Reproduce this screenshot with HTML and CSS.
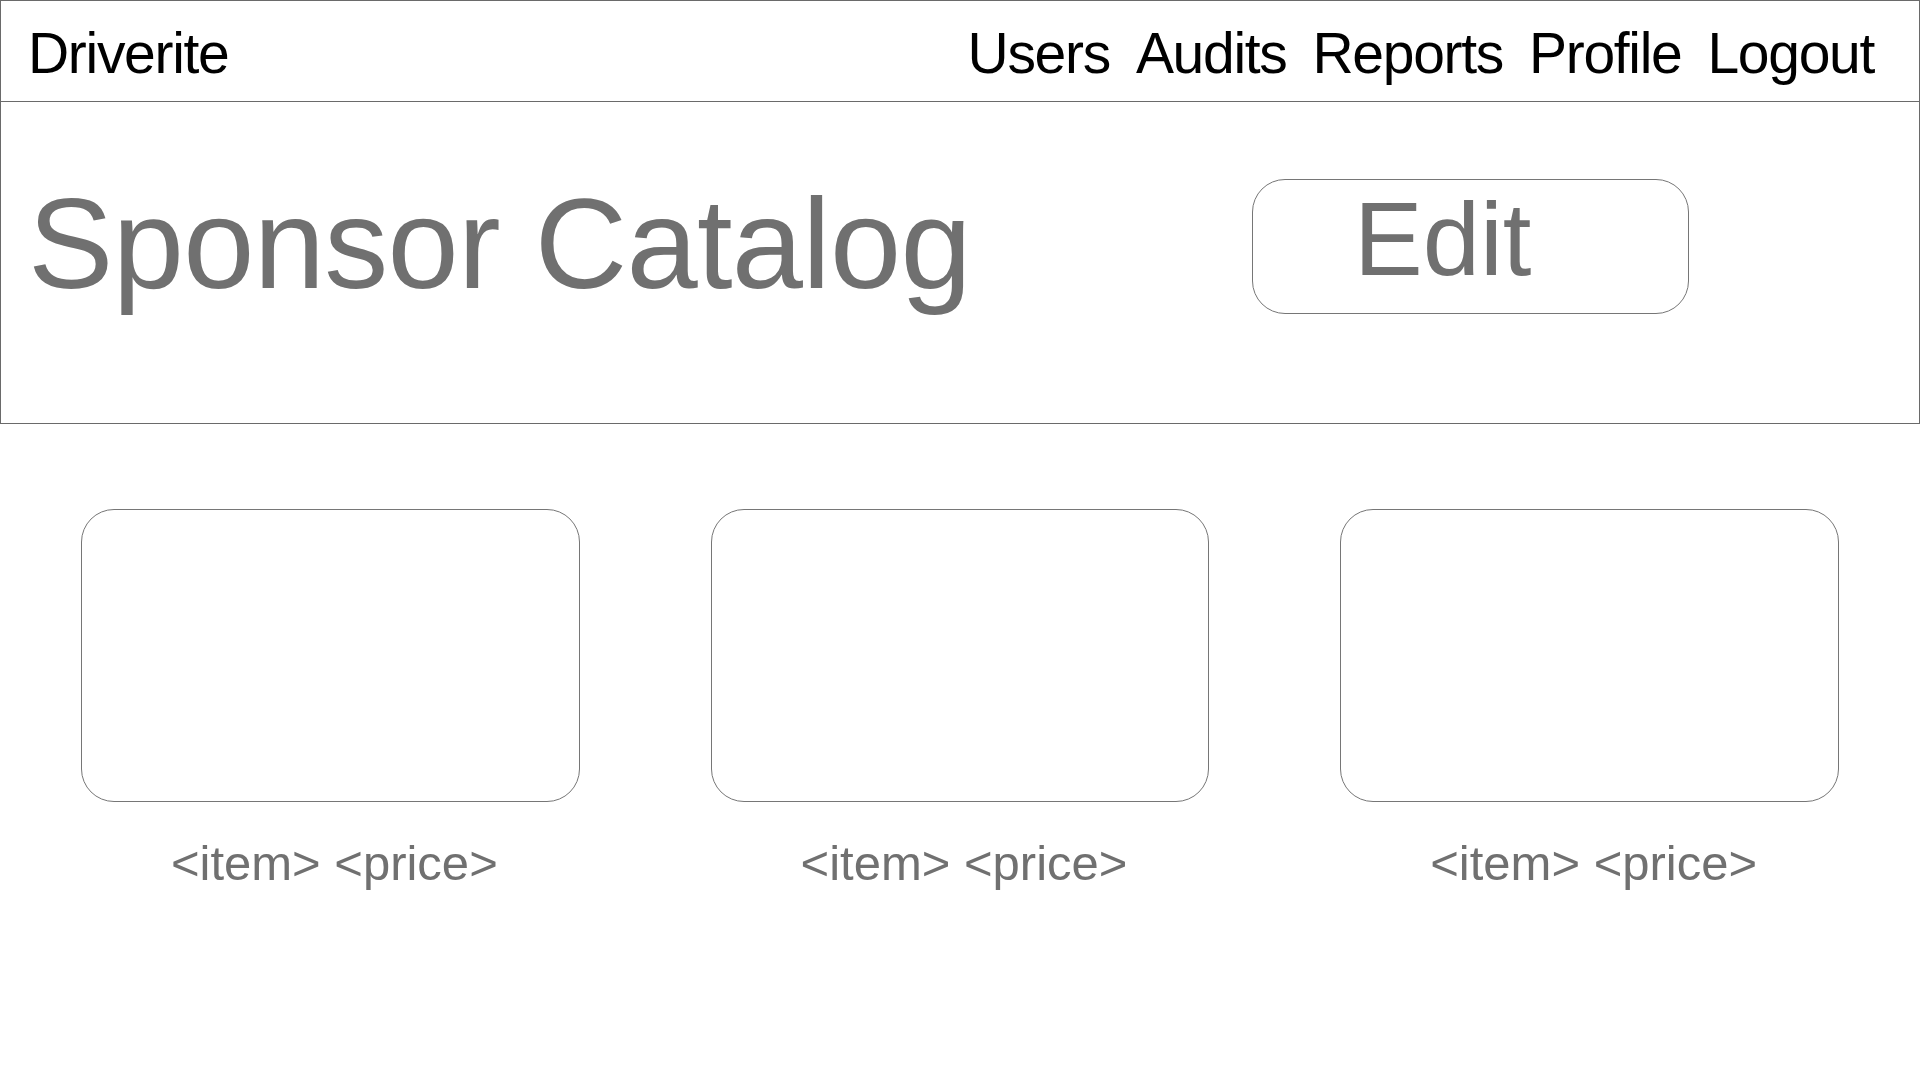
FILE: index.html
```html
<!DOCTYPE html>
<html lang="en">
<head>
<meta charset="utf-8">
<title>Driverite - Sponsor Catalog</title>
<link rel="stylesheet" href="styles.css">
</head>
<body>
<header class="topbar">
  <div class="brand">Driverite</div>
  <nav class="nav">
    <a class="nav-link" href="#">Users</a>
    <a class="nav-link" href="#">Audits</a>
    <a class="nav-link" href="#">Reports</a>
    <a class="nav-link" href="#">Profile</a>
    <a class="nav-link" href="#">Logout</a>
  </nav>
</header>
<section class="hero">
  <h1 class="title">Sponsor Catalog</h1>
  <button class="edit-btn" type="button"><span class="edit-label">Edit</span></button>
</section>
<main class="catalog">
  <div class="item">
    <div class="item-image"></div>
    <div class="item-caption">&lt;item&gt; &lt;price&gt;</div>
  </div>
  <div class="item">
    <div class="item-image"></div>
    <div class="item-caption">&lt;item&gt; &lt;price&gt;</div>
  </div>
  <div class="item">
    <div class="item-image"></div>
    <div class="item-caption">&lt;item&gt; &lt;price&gt;</div>
  </div>
</main>
</body>
</html>
```

FILE: styles.css
```css
* {
  box-sizing: border-box;
}

html, body {
  margin: 0;
  padding: 0;
  background: #ffffff;
}

body {
  font-family: "Liberation Sans", Arial, sans-serif;
  width: 1920px;
  height: 1080px;
  overflow: hidden;
}

.topbar {
  display: flex;
  align-items: flex-start;
  justify-content: space-between;
  height: 102px;
  border: 1px solid #6a6a6a;
  padding: 24px 45px 0 27px;
  font-size: 57px;
  line-height: 57px;
  letter-spacing: -1.3px;
  color: #000000;
}

.brand {
  white-space: nowrap;
}

.nav {
  display: flex;
  gap: 26px;
}

.nav-link {
  color: #000000;
  text-decoration: none;
  white-space: nowrap;
}

.hero {
  display: flex;
  align-items: flex-start;
  justify-content: space-between;
  height: 322px;
  border: 1px solid #6a6a6a;
  border-top: none;
  padding: 77px 230px 0 27px;
}

.title {
  margin: 1px 0 0 0;
  font-size: 128px;
  line-height: 128px;
  letter-spacing: -0.7px;
  font-weight: normal;
  color: #707070;
  white-space: nowrap;
}

.edit-btn {
  display: block;
  width: 437px;
  height: 135px;
  border: 1px solid #767676;
  border-radius: 33px;
  background: #ffffff;
  padding: 0 0 14px 101px;
  margin: 0;
  text-align: left;
  font-family: "Liberation Sans", Arial, sans-serif;
  color: #707070;
}

.edit-label {
  display: block;
  height: 103px;
  font-size: 103px;
  line-height: 103px;
}

.catalog {
  display: grid;
  grid-template-columns: repeat(3, 1fr);
  column-gap: 131px;
  padding: 0 81px;
  margin-top: 85px;
}

.item {
  display: flex;
  flex-direction: column;
  align-items: center;
}

.item-image {
  width: 100%;
  height: 293px;
  border: 1px solid #767676;
  border-radius: 33px;
  background: #ffffff;
}

.item-caption {
  margin-top: 37px;
  padding-left: 8px;
  font-size: 49px;
  line-height: 49px;
  color: #707070;
  white-space: nowrap;
}
```
